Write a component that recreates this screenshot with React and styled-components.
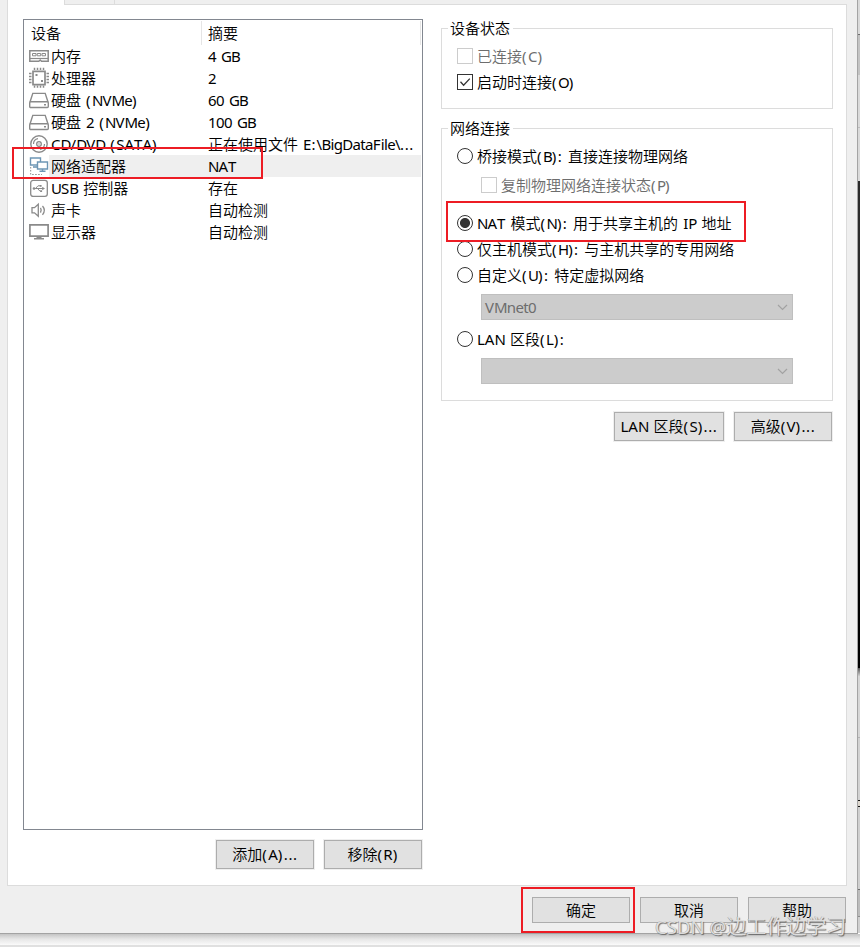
import {useState} from "react"
import styled, {createGlobalStyle, css} from "styled-components"

const devices = [
  {id: "memory", name: "内存", summary: "4 GB"},
  {id: "cpu", name: "处理器", summary: "2"},
  {id: "disk1", icon: "disk", name: "硬盘 (NVMe)", summary: "60 GB"},
  {id: "disk2", icon: "disk", name: "硬盘 2 (NVMe)", summary: "100 GB"},
  {id: "cd", name: "CD/DVD (SATA)", summary: "正在使用文件 E:\\BigDataFile\\..."},
  {id: "network", name: "网络适配器", summary: "NAT"},
  {id: "usb", name: "USB 控制器", summary: "存在"},
  {id: "sound", name: "声卡", summary: "自动检测"},
  {id: "display", name: "显示器", summary: "自动检测"},
]

// slices of the windows visible behind the dialog, top to bottom
const backdrop = [
  {h: 34, c: "#dadada"},
  {h: 1, c: "#6e6e6e"},
  {h: 40, c: "#c3c3c3"},
  {h: 52, c: "#dadada"},
  {h: 1, c: "#bdbdbd"},
  {h: 53, c: "#dadada"},
  {h: 219, c: "#2b2b2b"},
  {h: 268, c: "#000"},
  {h: 8, c: "linear-gradient(#555, #cfcfcf)"},
  {h: 61, c: "#d6d6d6"},
  {h: 1, c: "#b4b4b4"},
  {h: 62, c: "#d2d2d2"},
  {h: 1, c: "#111"},
  {h: 5, c: "#dcd6cd"},
  {h: 1, c: "#111"},
  {h: 82, c: "#cfcfcf"},
  {h: 1, c: "#6e6e6e"},
  {h: 26, c: "#bcbcbc"},
  {h: 1, c: "#8c8c8c"},
  {h: 16, c: "#cfcfcf"},
]

const icons = {
  memory: (
    <g fill="none" stroke="#8a8a8a">
      <path d="M.8 5.8H19.2V16.3H12.5L11.2 15L9.8 16.3H.8Z" strokeWidth="1.5"/>
      <path d="M3.5 8.5H7V10.8H3.5ZM8.2 8.5H11.7V10.8H8.2ZM13 8.5H16.5V10.8H13Z"/>
      <path d="M1 13.5H19" strokeWidth="1.2"/>
    </g>
  ),
  cpu: (
    <g fill="none" stroke="#8a8a8a">
      <path d="M4 4.3H16V17.7H4Z" strokeWidth="1.7"/>
      <path d="M5.5 .7V3M8.5 .7V3M11.5 .7V3M14.5 .7V3M5.5 18.5V20.8M8.5 18.5V20.8M11.5 18.5V20.8M14.5 18.5V20.8" strokeWidth="1.5"/>
      <path d="M0 6.5H2.5M0 9.5H2.5M0 12.5H2.5M0 15.5H2.5M17.5 6.5H20M17.5 9.5H20M17.5 12.5H20M17.5 15.5H20" strokeWidth="1.5"/>
      <path d="M6.5 8H8.5M12 14H14" strokeWidth="2"/>
    </g>
  ),
  disk: (
    <g fill="none" stroke="#8a8a8a" strokeWidth="1.4">
      <path d="M1 13L3.8 4.4H16.2L19 13"/>
      <rect x="0.7" y="12.7" width="18.6" height="5.8" rx="1"/>
      <path d="M15 15.7H17" strokeWidth="1.6"/>
    </g>
  ),
  cd: (
    <g fill="none" stroke="#8a8a8a">
      <circle cx="10" cy="11" r="8.2" strokeWidth="1.4"/>
      <circle cx="10" cy="11" r="2.3" strokeWidth="1.3"/>
      <circle cx="10" cy="11" r=".7" fill="#8a8a8a" stroke="none"/>
      <path d="M4.5 11A5.5 5.5 0 0 1 9 5.6M15.5 11A5.5 5.5 0 0 1 11 16.4" strokeWidth="1.2"/>
    </g>
  ),
  network: (
    <g fill="none">
      <path d="M1.7 12V19.5H13" stroke="#8a8a8a" strokeDasharray="1.5 1.5"/>
      <path d="M1.5 3H11.5V10H1.5Z" fill="#fff" stroke="#6d96b5" strokeWidth="1.4"/>
      <path d="M4 12H8" stroke="#6d96b5" strokeWidth="1.6"/>
      <path d="M8.5 7H18.5V14H8.5Z" fill="#fff" stroke="#6d96b5" strokeWidth="1.4"/>
      <path d="M13.5 14V16M10.5 16.3H16.5" stroke="#6d96b5" strokeWidth="1.4"/>
    </g>
  ),
  usb: (
    <g fill="none" stroke="#8a8a8a">
      <rect x="1.7" y="3.4" width="16.6" height="16" rx="2.4" strokeWidth="1.3"/>
      <path d="M4.5 11.5H15M6.5 11.5L9 8.8H11.5M8.5 11.5L11 14.2H12"/>
      <path d="M13.2 9.7L16 11.5L13.2 13.3ZM10.8 7.9H12.6V9.7H10.8ZM11.3 13.3H13.1V15.1H11.3Z" fill="#8a8a8a" stroke="none"/>
      <circle cx="5" cy="11.5" r="1.3" fill="#8a8a8a" stroke="none"/>
    </g>
  ),
  sound: (
    <g fill="none" stroke="#8a8a8a" strokeWidth="1.3">
      <path d="M3 8.7H5.5L9.3 5.2V17.3L5.5 13.8H3Z"/>
      <path d="M11.5 8.8Q13 11.2 11.5 13.7M13.5 7Q17.2 11.2 13.5 15.8"/>
    </g>
  ),
  display: (
    <g fill="none" stroke="#8a8a8a">
      <path d="M.9 3.9H19.1V15.2H.9Z" strokeWidth="1.7"/>
      <path d="M5 17.7H15M7.5 16.5H12.5" strokeWidth="1.5"/>
    </g>
  ),
}

const App = () => {
  const [selected, setSelected] = useState("network")
  const [mode, setMode] = useState("nat")
  const [autoConnect, setAutoConnect] = useState(true)

  return (
    <Screen>
      <GlobalStyle/>
      <Dialog>
        <TabStrip>
          <Tab $w={58} $active/>
          <Tab $w={50}/>
        </TabStrip>
        <Panel>
          <LeftColumn>
            <DeviceList>
              <HeaderRow>
                <HeaderCell $first><Text>设备</Text></HeaderCell>
                <HeaderCell><Text>摘要</Text></HeaderCell>
              </HeaderRow>
              {devices.map(({id, icon, name, summary}) => (
                <DeviceRow key={id} onClick={() => setSelected(id)}>
                  <svg width="20" height="22" viewBox="0 0 20 22">{icons[icon || id]}</svg>
                  <DeviceCells $selected={selected === id}>
                    <DeviceName><Text>{name}</Text></DeviceName>
                    <Text>{summary}</Text>
                  </DeviceCells>
                </DeviceRow>
              ))}
            </DeviceList>
            <ButtonRow $top={10}>
              <Button><Text>添加(A)...</Text></Button>
              <Button><Text>移除(R)</Text></Button>
            </ButtonRow>
          </LeftColumn>

          <RightColumn>
            <Group $h={81}>
              <Legend><Text>设备状态</Text></Legend>
              <Option $top={16} $disabled>
                <CheckMark $disabled/>
                <Text>已连接(C)</Text>
              </Option>
              <Option $top={4} onClick={() => setAutoConnect(!autoConnect)}>
                <CheckMark>
                  {autoConnect && <svg width="14" height="14"><path d="M2.5 6.8L5.6 10.2L11.8 3.6" fill="none" stroke="#333" strokeWidth="1.3"/></svg>}
                </CheckMark>
                <Text>启动时连接(O)</Text>
              </Option>
            </Group>

            <Group $h={273} $top={19}>
              <Legend><Text>网络连接</Text></Legend>
              <Option $top={16} onClick={() => setMode("bridge")}>
                <Radio $checked={mode === "bridge"}/>
                <Text>桥接模式(B): 直接连接物理网络</Text>
              </Option>
              <Option $top={7} $indent $disabled>
                <CheckMark $disabled/>
                <Text>复制物理网络连接状态(P)</Text>
              </Option>
              <Option $top={16} onClick={() => setMode("nat")}>
                <Radio $checked={mode === "nat"}/>
                <Text>NAT 模式(N): 用于共享主机的 IP 地址</Text>
              </Option>
              <Option $top={4} onClick={() => setMode("host")}>
                <Radio $checked={mode === "host"}/>
                <Text>仅主机模式(H): 与主机共享的专用网络</Text>
              </Option>
              <Option $top={4} onClick={() => setMode("custom")}>
                <Radio $checked={mode === "custom"}/>
                <Text>自定义(U): 特定虚拟网络</Text>
              </Option>
              <Select><Text>VMnet0</Text><Chevron/></Select>
              <Option $top={8} onClick={() => setMode("lan")}>
                <Radio $checked={mode === "lan"}/>
                <Text>LAN 区段(L):</Text>
              </Option>
              <Select><Text/><Chevron/></Select>
            </Group>
            <ButtonRow $top={11}>
              <Button $w={110}><Text>LAN 区段(S)...</Text></Button>
              <Button><Text>高级(V)...</Text></Button>
            </ButtonRow>
          </RightColumn>
        </Panel>
        <Footer>
          <Button $h={26}><Text>确定</Text></Button>
          <Button $h={26}><Text>取消</Text></Button>
          <Button $h={26}><Text>帮助</Text></Button>
        </Footer>
      </Dialog>
      <Backdrop>
        {backdrop.map(({h, c}, i) => <Slice key={i} $h={h} $c={c}/>)}
      </Backdrop>
      <Below/>
      <Highlight $x={12} $y={147} $w={251} $h={32}/>
      <Highlight $x={446} $y={201} $w={300} $h={41}/>
      <Highlight $x={521} $y={887} $w={114} $h={46}/>
      <Watermark><small>CSDN @</small>边工作边学习</Watermark>
    </Screen>
  )
}

export default App

const tracking = [
  [/^[()]/, 1.4],
  [/^[ :]/, 1.15],
  [/^[.]/, 0.6],
  [/^[BDGHMNOPU]/, -0.9],
  [/^[ACSTVRLIEF/]/, 0],
  [/^[\x20-\x7e]/, -0.6],
]

function Text({children = ""}) {
  return (
    <TextLine>
      {children.split(/([()]+|[ :]+|[.]+|[BDGHMNOPU]+|[ACSTVRLIEF/]+|[a-z0-9\\]+)/).filter(Boolean).map((run, i) => {
        const match = tracking.find(([pattern]) => pattern.test(run))
        return match ? <Latin key={i} $track={match[1]}>{run}</Latin> : <Han key={i}>{run}</Han>
      })}
    </TextLine>
  )
}

function Chevron() {
  return (
    <svg width="11" height="7" viewBox="0 0 11 7">
      <path d="M1 1L5.5 5.5L10 1" fill="none" stroke="#a2a2a2" strokeWidth="1.2"/>
    </svg>
  )
}

const GlobalStyle = createGlobalStyle`
  body {
    margin: 0;
    overflow: hidden;
  }

  * {
    box-sizing: border-box;
  }

  svg {
    display: block;
    flex: none;
  }
`

const Screen = styled.div`
  position: relative;
  display: grid;
  grid-template: 934px 13px / 857px 3px;
  width: 860px;
  height: 947px;
  overflow: hidden;
  font: 15px/22px "Noto Sans", "Noto Sans CJK SC", sans-serif;
  color: #000;
`

const Dialog = styled.main`
  display: flex;
  flex-direction: column;
  border-bottom: 1px solid #a3a3a3;
  background: #efefef;
`

const TabStrip = styled.div`
  display: flex;
  height: 4px;
  padding-left: 7px;
`

const Tab = styled.div`
  width: ${({$w}) => $w}px;
  border-right: 1px solid #dcdcdc;

  ${({$active}) => $active && css`
    height: 5px;
    border-left: 1px solid #dcdcdc;
    background: #fff;
    z-index: 1;
  `}
`

const Panel = styled.section`
  display: flex;
  width: 840px;
  height: 882px;
  margin-left: 7px;
  padding: 14px 13px 0 15px;
  border: 1px solid #dcdcdc;
  background: #fff;
`

const LeftColumn = styled.div`
  width: 400px;
`

const RightColumn = styled.div`
  width: 392px;
  margin-left: 18px;
  padding-top: 9px;
`

const DeviceList = styled.div`
  width: 400px;
  height: 811px;
  border: 1px solid #828790;
`

const HeaderRow = styled.div`
  display: flex;
  height: 25px;
  padding-top: 1px;
`

const HeaderCell = styled.div`
  width: ${({$first}) => $first ? 178 : 219}px;
  padding: 1px 0 0 ${({$first}) => $first ? 7 : 6}px;
  border-right: 1px solid #e5e5e5;
`

const DeviceRow = styled.div`
  display: flex;
  height: 22px;
  padding: 0 1px 0 5px;
`

const DeviceCells = styled.div`
  display: flex;
  flex: 1;
  padding-left: 2px;
  background: ${({$selected}) => $selected ? "#efefef" : "transparent"};
`

const DeviceName = styled.div`
  width: 157px;
`

const TextLine = styled.span`
  display: block;
  font-size: 15px;
  line-height: 22px;
  font-kerning: none;
  white-space: pre;
`

const Latin = styled.span`
  letter-spacing: ${({$track}) => $track}px;
`

const Han = styled.span`
  font-weight: 350;
`

const Group = styled.fieldset`
  position: relative;
  height: ${({$h}) => $h}px;
  margin: ${({$top}) => $top || 0}px 0 0;
  padding: 0 0 0 15px;
  border: 1px solid #dcdcdc;
`

const Legend = styled.span`
  position: absolute;
  top: -12px;
  left: 6px;
  width: 65px;
  padding-left: 2px;
  background: #fff;
`

const Option = styled.div`
  display: flex;
  align-items: center;
  gap: 4px;
  height: 22px;
  margin-top: ${({$top}) => $top}px;
  margin-left: ${({$indent}) => $indent ? 24 : 0}px;
  color: ${({$disabled}) => $disabled ? "#6d6d6d" : "#000"};
`

const CheckMark = styled.span`
  flex: none;
  width: 16px;
  height: 16px;
  border: 1px solid ${({$disabled}) => $disabled ? "#ccc" : "#333"};
  background: #fff;
`

const Radio = styled.span`
  flex: none;
  width: 16px;
  height: 16px;
  border: 1px solid #333;
  border-radius: 50%;
  background: ${({$checked}) => $checked ? "radial-gradient(circle, #333 4.6px, #fff 5.4px)" : "#fff"};
`

const Select = styled.div`
  display: flex;
  align-items: center;
  justify-content: space-between;
  width: 312px;
  height: 26px;
  margin: 8px 0 0 24px;
  padding: 0 4px 0 3px;
  border: 1px solid #bfbfbf;
  background: #ccc;
  color: #6d6d6d;
`

const ButtonRow = styled.div`
  display: flex;
  justify-content: flex-end;
  gap: 10px;
  margin-top: ${({$top}) => $top}px;
  padding-right: 1px;
`

const Button = styled.button`
  display: flex;
  align-items: center;
  justify-content: center;
  width: ${({$w}) => $w || 98}px;
  height: ${({$h}) => $h || 29}px;
  padding: 0 0 ${({$h}) => $h ? 0 : 1}px;
  border: 1px solid #adadad;
  outline: 1px solid #efefef;
  background: #e1e1e1;
  font: inherit;
  color: inherit;
`

const Footer = styled.footer`
  display: flex;
  justify-content: flex-end;
  gap: 10px;
  padding: 11px 11px 0 0;
`

const Backdrop = styled.aside`
  height: 934px;
  border-left: 1px solid rgba(90, 90, 90, 0.55);
`

const Slice = styled.div`
  height: ${({$h}) => $h}px;
  background: ${({$c}) => $c};
`

const Below = styled.div`
  grid-column: 1 / 3;
  border-bottom: 2px solid #e0e0e0;
  background: linear-gradient(#c4c4c4, #e6e6e6 45%, #fafafa);
`

const Highlight = styled.div`
  position: absolute;
  top: ${({$y}) => $y}px;
  left: ${({$x}) => $x}px;
  width: ${({$w}) => $w}px;
  height: ${({$h}) => $h}px;
  border: 2px solid #ed1c24;
  pointer-events: none;
`

const Watermark = styled.div`
  position: absolute;
  top: 914px;
  left: 655px;
  font-size: 20px;
  line-height: 26px;
  white-space: nowrap;
  color: rgba(235, 235, 235, 0.9);
  text-shadow: 1px 1px 1px rgba(70, 70, 70, 0.75), -0.5px -0.5px 0 rgba(110, 110, 110, 0.6);

  small {
    font-size: 18.6px;
  }
`
